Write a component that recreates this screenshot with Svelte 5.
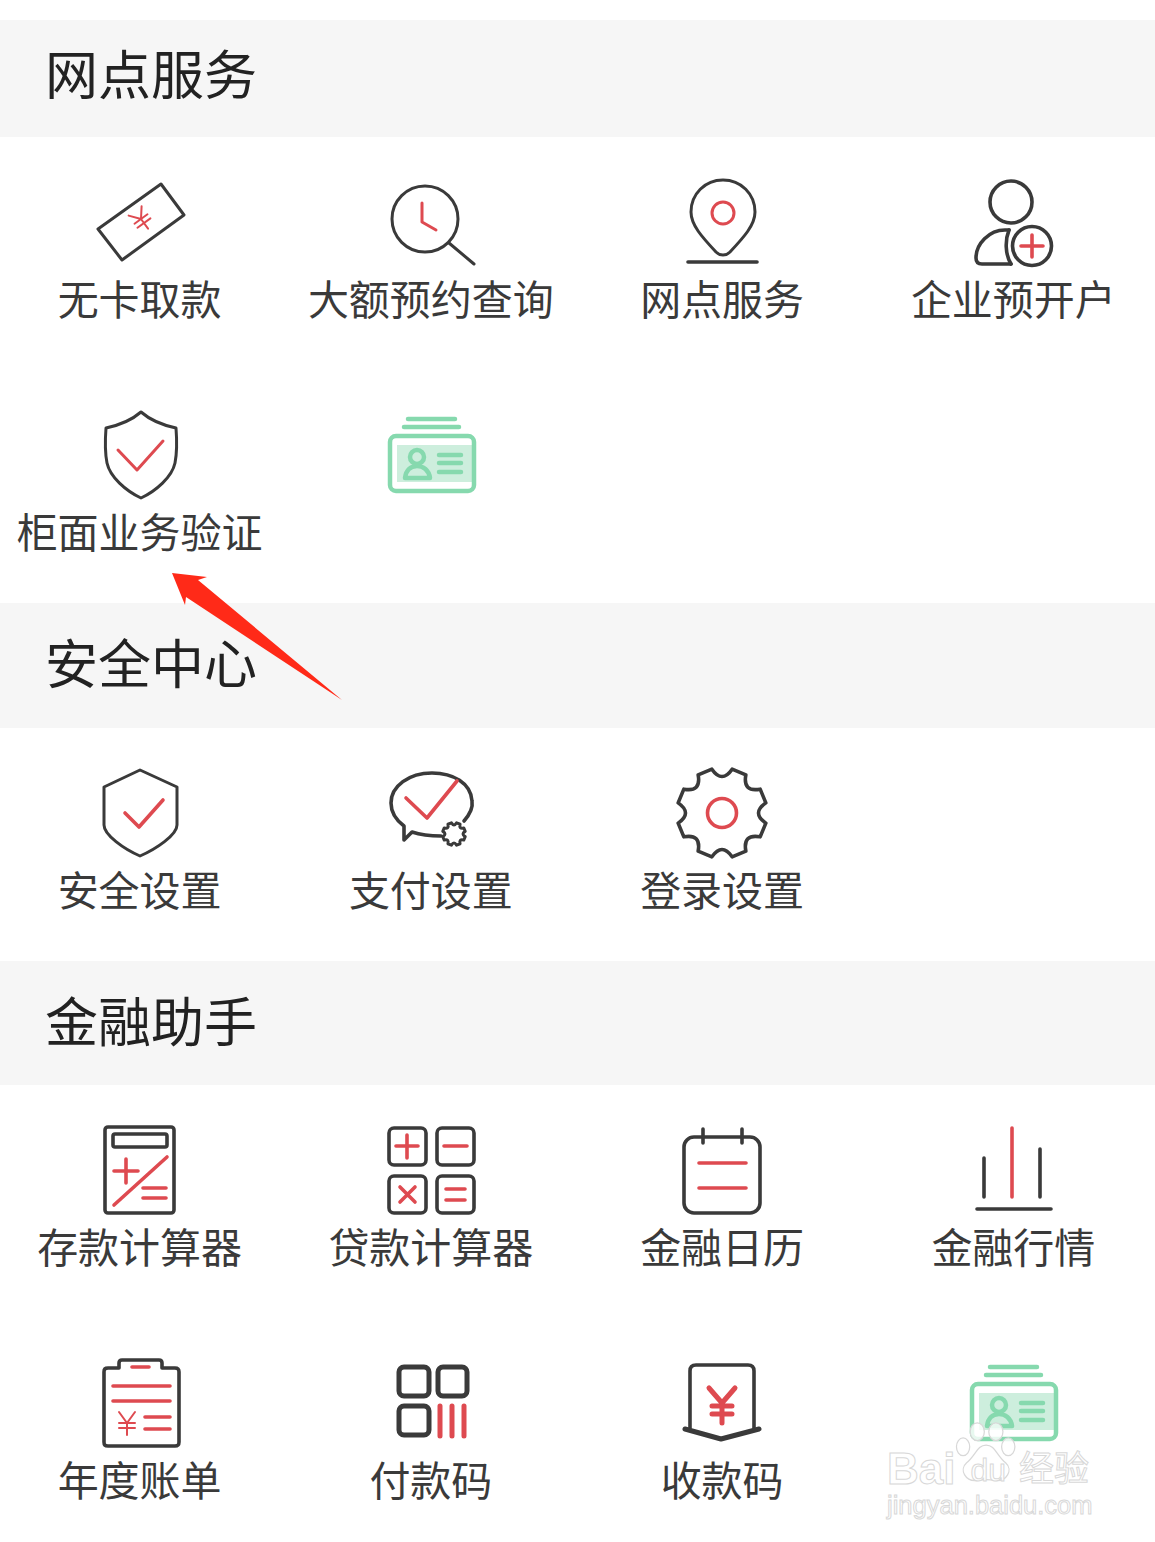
<script>
  const SECTIONS = [
    {
      title: '网点服务',
      first: true,
      items: [
        { icon: 'ticket', label: '无卡取款' },
        { icon: 'search', label: '大额预约查询' },
        { icon: 'pin', label: '网点服务' },
        { icon: 'person', label: '企业预开户' },
        { icon: 'shield', label: '柜面业务验证' },
        { icon: 'card', label: '' },
      ],
    },
    {
      title: '安全中心',
      items: [
        { icon: 'shield2', label: '安全设置' },
        { icon: 'chat', label: '支付设置' },
        { icon: 'gear', label: '登录设置' },
      ],
    },
    {
      title: '金融助手',
      items: [
        { icon: 'calc', label: '存款计算器' },
        { icon: 'ops', label: '贷款计算器' },
        { icon: 'calendar', label: '金融日历' },
        { icon: 'chart', label: '金融行情' },
        { icon: 'bill', label: '年度账单' },
        { icon: 'qr', label: '付款码' },
        { icon: 'receive', label: '收款码' },
        { icon: 'card', label: '' },
      ],
    },
  ]

  // 8 teeth: concave valley on the axes and diagonals, blunt tip between them
  function gearPath(cx, cy, rTip, rValley) {
    const pt = (deg, r) => {
      const a = (deg * Math.PI) / 180
      return (cx + r * Math.sin(a)).toFixed(2) + ' ' + (cy - r * Math.cos(a)).toFixed(2)
    }
    const ctrl = 2 * rValley - rTip * Math.cos((13 * Math.PI) / 180)
    let d = 'M' + pt(-13, rTip)
    for (let i = 0; i < 8; i++) {
      const v = i * 45
      d += 'Q' + pt(v, ctrl) + ' ' + pt(v + 13, rTip)
      d += 'L' + pt(v + 32, rTip)
    }
    return d + 'Z'
  }
</script>

{#snippet icon(name)}
  <svg class="icon" viewBox="0 0 100 100" width="100" height="100" fill="none" aria-hidden="true">
    {#if name === 'ticket'}
      <path class="dk thin" d="M71 12 94 43 32 88 8 57Z" />
      <g class="rd hair" transform="rotate(-36 51 47)">
        <path d="M43 37 51 47 59 37M51 47V59M43 47H59M43 52H59" />
      </g>
    {:else if name === 'search'}
      <circle class="dk thin" cx="44" cy="47" r="33" />
      <path class="dk thin" d="M68 71 93 92" />
      <path class="rd thin" d="M41 31V50L55 58" />
    {:else if name === 'pin'}
      <path class="dk thin" d="M51 8C33 8 19 22 19 40 19 53 30 65 44 80 48 84 54 84 58 80 72 65 83 53 83 40 83 22 69 8 51 8Z" />
      <circle class="rd thin" cx="51" cy="41" r="11" />
      <path class="dk" d="M16 90H85" />
    {:else if name === 'person'}
      <circle class="dk" cx="48" cy="30" r="21" />
      <path class="dk" d="M46 58H42C26 58 13 72 13 86 13 90 15 92 19 92H48" />
      <path class="dk" d="M46 58C42 68 42 82 48 92" />
      <circle class="dk" cx="69" cy="74" r="19.5" />
      <path class="rd" d="M69 63V85M58 74H80" />
    {:else if name === 'shield'}
      <path class="dk thin" d="M51 7C43 14 30 20 16 23 15 36 15 48 17 58 20 72 36 86 51 93 66 86 82 72 85 58 87 48 87 36 86 23 72 20 59 14 51 7Z" />
      <path class="rd thin" d="M28 45 47 65 73 36" />
    {:else if name === 'shield2'}
      <path class="dk thin" d="M50 7 14 24V62C14 72 34 86 50 93 66 86 87 72 87 62V24Z" />
      <path class="rd" d="M35 50 49 64 73 37" />
    {:else if name === 'card'}
      <path class="gn" d="M27 14H74M23 22H78" />
      <rect class="gn-fill" x="16" y="40" width="75" height="37" />
      <rect class="gn" x="9" y="31" width="84" height="55" rx="6" />
      <circle class="gn" cx="36" cy="52" r="7" />
      <path class="gn" d="M24 73C25 65 30 61 36 61 42 61 48 65 49 73ZM58 50H80M58 58H80M58 67H80" />
    {:else if name === 'chat'}
      <path class="dk" d="M83 58C90 50 92 44 91 38 90 20 72 10 51 10 28 10 10 23 10 40 10 49 15 57 23 63L23 77 31 69C40 72 50 73 60 73" />
      <path class="rd" d="M25 35 46 55 76 18" />
      <path class="dk thin" d={gearPath(73, 71, 11.5, 9)} />
    {:else if name === 'gear'}
      <path class="dk" d={gearPath(50, 50, 45, 36.5)} />
      <circle class="rd" cx="50" cy="50" r="14.5" />
    {:else if name === 'calc'}
      <rect class="dk" x="15" y="7" width="69" height="86" rx="3" />
      <rect class="dk" x="23" y="14" width="54" height="13" rx="2" />
      <path class="rd" d="M24 85 77 37M36 39V63M24 51H48M53 68H76M53 78H76" />
    {:else if name === 'ops'}
      <rect class="dk" x="8" y="8" width="37" height="37" rx="5" />
      <rect class="dk" x="56" y="8" width="37" height="37" rx="5" />
      <rect class="dk" x="8" y="56" width="37" height="37" rx="5" />
      <rect class="dk" x="56" y="56" width="37" height="37" rx="5" />
      <path class="rd" d="M26 15V38M15 26H37M63 26H86M19 67 34 82M34 67 19 82M65 69H84M65 80H84" />
    {:else if name === 'calendar'}
      <rect class="dk" x="12" y="17" width="76" height="76" rx="10" />
      <path class="dk" d="M31 9V23M70 9V23" />
      <path class="rd" d="M27 43H74M27 68H74" />
    {:else if name === 'chart'}
      <path class="dk" d="M21 38V77M77 29V77M14 89H88" />
      <path class="rd" d="M49 8V77" />
    {:else if name === 'bill'}
      <path class="dk" d="M29 15V10C29 8 30 7 32 7H69C71 7 72 8 72 10V15H85C88 15 89 16 89 19V89C89 92 88 93 85 93H18C15 93 14 92 14 89V19C14 16 15 15 18 15Z" />
      <path class="rd" d="M42 14H59M23 33H80M23 48H80M55 64H80M55 76H80" />
      <path class="rd hair" d="M29 59 37 70 45 59M37 70V82M29 70H45M29 75H45" />
    {:else if name === 'qr'}
      <rect class="dk wide" x="18" y="14" width="30" height="29" rx="5" />
      <rect class="dk wide" x="57" y="14" width="29" height="29" rx="5" />
      <rect class="dk wide" x="18" y="53" width="30" height="29" rx="5" />
      <path class="rd wide" d="M59 53V83M71 53V83M83 53V83" />
    {:else if name === 'receive'}
      <path class="dk" d="M18 75V18C18 14 20 12 24 12H76C80 12 82 14 82 18V75" />
      <path class="dk wide" d="M13 76 49 86 87 76" />
      <path class="rd wide" d="M37 35 50 50 63 35M50 50V70M40 53H60M40 61H60" />
    {/if}
  </svg>
{/snippet}

<div class="page">
  {#each SECTIONS as section}
    <section>
      <h2 class="bar" class:first={section.first}>{section.title}</h2>
      <div class="grid">
        {#each section.items as item}
          <div class="item">
            {@render icon(item.icon)}
            {#if item.label}<span class="label">{item.label}</span>{/if}
          </div>
        {/each}
      </div>
    </section>
  {/each}

  <!-- annotation arrow drawn over the screenshot -->
  <svg class="arrow" viewBox="0 0 180 135" width="180" height="135" aria-hidden="true">
    <path d="M2 3 37 7 28 10 172 130 16 27 15 35Z" />
  </svg>

  <!-- watermark -->
  <div class="watermark">
    <div class="wm-brand">
      <span class="wm-bai">Bai</span>
      <svg class="paw" viewBox="0 0 70 70" width="62" height="62" aria-hidden="true">
        <ellipse cx="24" cy="11" rx="8" ry="10" />
        <ellipse cx="45" cy="11" rx="8" ry="10" />
        <ellipse cx="8" cy="28" rx="7.5" ry="10" />
        <ellipse cx="59" cy="28" rx="7.5" ry="10" />
        <path d="M34 26C24 26 22 38 12 46 3 54 11 68 24 66 30 65 38 65 44 66 57 68 65 54 56 46 46 38 44 26 34 26Z" />
      </svg>
      <span class="wm-du">du</span>
      <span class="wm-cn">经验</span>
    </div>
    <div class="wm-url">jingyan.baidu.com</div>
  </div>
</div>

<style>
  :global(body) {
    background: #fff;
  }

  .page {
    position: relative;
    width: 1155px;
    height: 1542px;
    overflow: hidden;
    padding-top: 20px;
    box-sizing: border-box;
    background: #fff;
    font-family: "Noto Sans CJK SC", "Noto Sans", sans-serif;
  }

  .bar {
    display: flex;
    align-items: center;
    height: 124.5px;
    margin: 0;
    padding: 0 0 7px 45px;
    box-sizing: border-box;
    background: #f6f6f6;
    color: #222;
    font-size: 53px;
    font-weight: 400;
    line-height: 1;
  }
  .bar.first {
    height: 117px;
    padding-bottom: 13px;
  }

  .grid {
    display: grid;
    grid-template-columns: repeat(4, 291.25px);
    grid-auto-rows: 233px;
    margin-left: -6px;
  }

  .item {
    display: flex;
    flex-direction: column;
    align-items: center;
    padding-top: 35px;
    box-sizing: border-box;
  }

  .icon {
    flex-shrink: 0;
  }

  .label {
    color: #3a3a3a;
    font-size: 41px;
    line-height: 50px;
    white-space: nowrap;
  }

  .dk, .rd, .gn {
    fill: none;
    stroke-linecap: round;
    stroke-linejoin: round;
    stroke-width: 3.6;
  }
  .dk { stroke: #3a3a3a; }
  .rd { stroke: #de4a50; }
  .gn { stroke: #86d9ae; stroke-width: 4.5; }
  .gn-fill { fill: #cdeedd; }
  .thin { stroke-width: 3; }
  .hair { stroke-width: 2; }
  .wide { stroke-width: 5; }

  .arrow {
    position: absolute;
    left: 170px;
    top: 570px;
  }
  .arrow path {
    fill: #ff2a18;
  }

  .watermark {
    position: absolute;
    left: 887px;
    top: 1420px;
    width: 210px;
    color: #fff;
    font-family: "Liberation Sans", sans-serif;
    -webkit-text-stroke: 1px #d8d8d8;
  }
  .wm-brand {
    display: flex;
    align-items: flex-end;
    height: 64px;
    font-size: 44px;
    line-height: 1;
    white-space: nowrap;
  }
  .wm-bai {
    margin-bottom: -7px;
    font-weight: 700;
  }
  .paw {
    margin-left: 1px;
    overflow: visible;
  }
  .paw ellipse, .paw path {
    fill: #fff;
    fill-opacity: 0.8;
    stroke: #d8d8d8;
    stroke-width: 1.4;
  }
  .wm-du {
    margin-left: -48px;
    margin-bottom: -2px;
    font-size: 32px;
  }
  .wm-cn {
    margin-left: 13px;
    margin-bottom: 1px;
    font-family: "Noto Sans CJK SC", sans-serif;
    font-size: 35px;
  }
  .wm-url {
    margin-top: 6px;
    font-size: 25.5px;
    line-height: 30px;
    white-space: nowrap;
  }
</style>
